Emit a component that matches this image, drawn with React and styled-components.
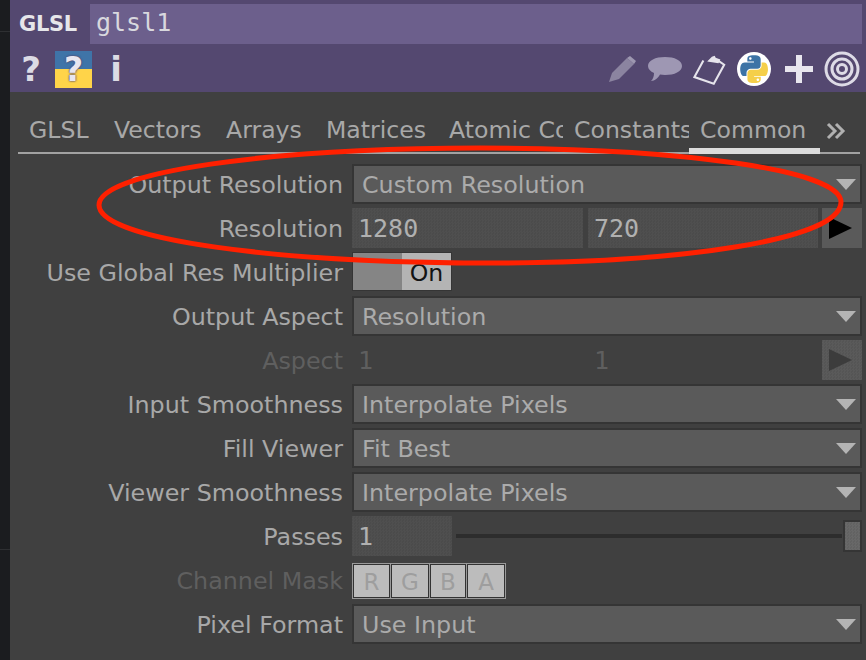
import React from "react";
import styled, { createGlobalStyle } from "styled-components";

const Global = createGlobalStyle`
  html, body { margin: 0; padding: 0; background: #404040; }
  * { box-sizing: border-box; }
`;
const SANS = `"DejaVu Sans", Verdana, sans-serif`;
const MONO = `"DejaVu Sans Mono", monospace`;
const dots = (a, b) => `repeating-conic-gradient(${a} 0 25%, ${b} 0 50%) 0 0 / 3px 3px`;

const Page = styled.div`
  position: relative; width: 866px; height: 660px; overflow: hidden;
  display: flex; background: #404040; font-family: ${SANS};
`;
const Strip = styled.div`
  width: 10px; flex: none; background: #1b1c1f; position: relative;
  &::before, &::after { content: ""; position: absolute; left: 0; right: 0; height: 1px; background: #2e2f32; }
  &::before { top: 31px; }
  &::after { top: 549px; }
`;
const Main = styled.div`flex: 1; min-width: 0; display: flex; flex-direction: column;`;
const Header = styled.header`
  height: 92px; flex: none; background: #544870; padding: 4px 4px 0 9px;
  display: flex; flex-direction: column; gap: 6px;
`;
const NameRow = styled.div`display: flex; align-items: center; height: 40px;`;
const OpType = styled.div`width: 71px; font-size: 21px; font-weight: 700; color: #e6e6ea; letter-spacing: -0.3px; white-space: nowrap;`;
const NameField = styled.div`
  flex: 1; height: 40px; background: #6c5f8c; color: #d8d8de; font: 25px/38px ${MONO}; padding-left: 6px;
`;
const IconBar = styled.div`display: flex; align-items: center; justify-content: space-between; height: 38px; padding-right: 2px;`;
const IconGroup = styled.div`display: flex; align-items: center; gap: ${p => p.$gap}px;`;
const Glyph = styled.span`
  font: 700 ${p => p.$size}px/38px ${SANS}; color: #dcdbe4; width: ${p => p.$w}px; text-align: center;
`;
const Tabs = styled.nav`
  height: 62px; flex: none; margin: 0 6px 0 8px; padding-top: 20px; display: flex;
  border-bottom: 2px solid #a2a2a2;
`;
const Tab = styled.div`
  width: ${p => p.$w}px; flex: none; height: 42px; margin-bottom: -2px; padding-left: 11px;
  overflow: hidden; white-space: nowrap; font-size: 23.6px; line-height: 36px; color: #a8a8a8;
  border-bottom: ${p => (p.$active ? "6px solid #dcdcdc" : "none")};
`;
const More = styled.div`padding: 9px 0 0 6px;`;
const Rows = styled.section`padding-top: 10px; display: flex; flex-direction: column; gap: 4px;`;
const Row = styled.div`display: flex; align-items: center; gap: 9px; height: 40px; padding-right: 4px;`;
const Label = styled.div`
  width: 333px; flex: none; text-align: right; font-size: 23.8px; line-height: 36px; padding-top: 2px; white-space: nowrap;
  color: ${p => (p.$off ? "#5f5f5f" : "#a8a8a8")};
`;
const Select = styled.div`
  flex: 1; height: 40px; background: #5a5a5a; border: 2px solid #353535; display: flex; align-items: center;
  justify-content: space-between; padding: 2px 4px 0 8px; font-size: 23.8px; color: #ababab; white-space: nowrap;
`;
const Caret = styled.i`
  width: 0; height: 0; margin-top: -2px; border-left: 10px solid transparent; border-right: 10px solid transparent;
  border-top: 11px solid #b4b4b4;
`;
const Values = styled.div`flex: 1; display: flex; gap: ${p => p.$gap ?? 5}px;`;
const NumField = styled.div`
  width: ${p => p.$w}px; flex: none; height: 40px; padding-left: 6px; font: 25px/42px ${MONO};
  color: ${p => (p.$off ? "#5f5f5f" : "#b0b0b0")};
  background: ${p => (p.$off ? "none" : dots("#4f4f4f", "#4b4b4b"))};
`;
const ArrowBtn = styled.div`
  width: 40px; height: 40px; flex: none; margin-left: -1px; display: flex; align-items: center; padding-left: 7px;
  background: ${p => (p.$off ? dots("#5a5a5a", "#555") : "#5a5a5a")};
  &::after {
    content: ""; border-top: 11px solid transparent; border-bottom: 11px solid transparent;
    border-left: 23px solid ${p => (p.$off ? "#3c3c3c" : "#000")};
  }
`;
const Toggle = styled.div`
  width: 100px; height: 39px; display: flex; margin-top: -1px; border: 1px solid #353535;
`;
const ToggleOff = styled.div`flex: 1; background: #858585;`;
const ToggleOn = styled.div`
  flex: 1; background: #b4b4b4; color: #141414; font-size: 23.6px; line-height: 41px; text-align: center;
`;
const SliderWrap = styled.div`flex: 1; margin-left: -5px; display: flex; align-items: center; gap: 4px;`;
const Track = styled.div`flex: 1; height: 4px; background: #2d2d2d;`;
const Thumb = styled.div`
  width: 19px; height: 32px; flex: none; margin-left: -3px; border: 2px solid #353535; background: ${dots("#686868", "#626262")};
`;
const Mask = styled.div`
  height: 36px; margin-top: 2px; display: flex; gap: 1px; padding: 1px; background: #9a9a9a;
`;
const MaskBtn = styled.div`
  width: ${p => p.$w}px; border: 1px solid #333; background: #bcbcbc; color: #9e9e9e;
  font-size: 23px; line-height: 34px; text-align: center;
`;
const Scribble = styled.svg`position: absolute; inset: 0; pointer-events: none;`;

const PythonLogo = ({ size }) => (
  <svg width={size} height={size} viewBox="0 0 110 110">
    <path fill="#3d74a6" d="M54.9 1c-4.6 0-9 .4-12.8 1.1C30.8 4.1 28.8 8.2 28.8 15.9v10.1h26.2v3.4H19c-7.6 0-14.3 4.6-16.4 13.3-2.4 10-2.5 16.2 0 26.6 1.9 7.8 6.3 13.3 13.9 13.3h9v-12c0-8.7 7.5-16.3 16.4-16.3h26.2c7.3 0 13.1-6 13.1-13.3V15.9c0-7.1-6-12.4-13.1-13.6C63.6 1.3 59.5 1 54.9 1z M40.7 9.1c2.7 0 4.9 2.2 4.9 5 0 2.7-2.2 4.9-4.9 4.9-2.7 0-4.9-2.2-4.9-4.9 0-2.8 2.2-5 4.9-5z" />
    <path fill="#f5cf4a" d="M84.9 29.4v11.6c0 9-7.6 16.6-16.4 16.6H42.3c-7.2 0-13.1 6.1-13.1 13.3v25c0 7.1 6.2 11.3 13.1 13.3 8.3 2.4 16.3 2.9 26.2 0 6.6-1.9 13.1-5.8 13.1-13.3v-10H55.4v-3.3h39.4c7.6 0 10.5-5.3 13.1-13.3 2.7-8.2 2.6-16.1 0-26.6-1.9-7.6-5.5-13.3-13.1-13.3z M70.1 92.7c2.7 0 4.9 2.2 4.9 4.9 0 2.8-2.2 5-4.9 5-2.7 0-4.9-2.2-4.9-5 0-2.7 2.2-4.9 4.9-4.9z" />
  </svg>
);

const PyBadge = styled.div`
  width: 34px; height: 34px; margin-right: 3px; border-radius: 50%; background: #fff; display: flex; align-items: center; justify-content: center;
`;
const HelpBadge = styled.div`
  width: 37px; height: 37px; background: linear-gradient(#3f74a8 0 50%, #ffd449 50%); display: flex; align-items: center; justify-content: center;
  color: #e8e6f0; font: 700 33px/37px ${SANS}; text-shadow: 0 0 2px #544870, 0 0 2px #544870;
`;

const Pencil = () => (
  <svg width="30" height="30" viewBox="0 0 30 30">
    <path d="M2 28l3-9L20 4l7 6-15 15z" fill="#8b84a0" />
    <path d="M20 4l3-2 6 5-2 3z" fill="#9d97b0" />
  </svg>
);
const Speech = () => (
  <svg width="36" height="28" viewBox="0 0 36 28">
    <path d="M18 2c9.5 0 17 3.400 17 9s-7.500 9-17 9c-2 0-3.500-.2-5-.5C11 23 8 26 4 26c2-2 3-4.500 3-8C3.500 16.500 1 14 1 11c0-5.600 7.500-9 17-9z" fill="#9e97b3" />
  </svg>
);
const Clipboard = () => (
  <svg width="34" height="34" viewBox="0 0 36 36" fill="none" stroke="#e6e4ec" strokeWidth="2.200">
    <path d="M11 9L1.500 26.500 22 33.500 33 13.500 27 9.500" />
    <path d="M15 10l5-5 3-1 1 2 5 2-2 4z" fill="#e6e4ec" stroke="none" />
  </svg>
);
const Plus = () => (
  <svg width="30" height="30" viewBox="0 0 30 30"><path d="M12 1h6v11h11v6H18v11h-6V18H1v-6h11z" fill="#e8e6ee" /></svg>
);
const Target = () => (
  <svg width="36" height="36" viewBox="0 0 36 36" fill="none" stroke="#dddbe6" strokeWidth="3">
    <circle cx="18" cy="18" r="16" /><circle cx="18" cy="18" r="10" /><circle cx="18" cy="18" r="4.500" />
  </svg>
);
const Chevrons = () => (
  <svg width="20" height="20" viewBox="0 0 20 20" fill="none" stroke="#b0b0b0" strokeWidth="3">
    <path d="M2 3l7 7-7 7M10 3l7 7-7 7" />
  </svg>
);

const tabs = [["GLSL", 85], ["Vectors", 112], ["Arrays", 100], ["Matrices", 123], ["Atomic Counters", 125], ["Constants", 126], ["Common", 131, true]];

export default function App() {
  return (
    <Page>
      <Global />
      <Strip />
      <Main>
        <Header>
          <NameRow>
            <OpType>GLSL</OpType>
            <NameField>glsl1</NameField>
          </NameRow>
          <IconBar>
            <IconGroup $gap={12}>
              <Glyph $size={34} $w={24}>?</Glyph>
              <HelpBadge>?</HelpBadge>
              <Glyph $size={34} $w={24}>i</Glyph>
            </IconGroup>
            <IconGroup $gap={10}>
              <Pencil /><Speech /><Clipboard />
              <PyBadge><PythonLogo size={28} /></PyBadge>
              <Plus /><Target />
            </IconGroup>
          </IconBar>
        </Header>
        <Tabs>
          {tabs.map(([t, w, a]) => <Tab key={t} $w={w} $active={a}>{t}</Tab>)}
          <More><Chevrons /></More>
        </Tabs>
        <Rows>
          <Row><Label>Output Resolution</Label><Select>Custom Resolution<Caret /></Select></Row>
          <Row>
            <Label>Resolution</Label>
            <Values>
              <NumField $w={231}>1280</NumField>
              <NumField $w={230}>720</NumField>
              <ArrowBtn />
            </Values>
          </Row>
          <Row><Label>Use Global Res Multiplier</Label><Toggle><ToggleOff /><ToggleOn>On</ToggleOn></Toggle></Row>
          <Row><Label>Output Aspect</Label><Select>Resolution<Caret /></Select></Row>
          <Row>
            <Label $off>Aspect</Label>
            <Values>
              <NumField $w={231} $off>1</NumField>
              <NumField $w={230} $off>1</NumField>
              <ArrowBtn $off />
            </Values>
          </Row>
          <Row><Label>Input Smoothness</Label><Select>Interpolate Pixels<Caret /></Select></Row>
          <Row><Label>Fill Viewer</Label><Select>Fit Best<Caret /></Select></Row>
          <Row><Label>Viewer Smoothness</Label><Select>Interpolate Pixels<Caret /></Select></Row>
          <Row>
            <Label>Passes</Label>
            <NumField $w={100}>1</NumField>
            <SliderWrap><Track /><Thumb /></SliderWrap>
          </Row>
          <Row>
            <Label $off>Channel Mask</Label>
            <Mask>
              <MaskBtn $w={37}>R</MaskBtn><MaskBtn $w={38}>G</MaskBtn><MaskBtn $w={36}>B</MaskBtn><MaskBtn $w={38}>A</MaskBtn>
            </Mask>
          </Row>
          <Row><Label>Pixel Format</Label><Select>Use Input<Caret /></Select></Row>
        </Rows>
      </Main>
      <Scribble width="866" height="660" viewBox="0 0 866 660">
        <path d="M99 205 C99 172 270 148 480 148 C680 148 841 170 841 202 C841 240 680 263 490 263 C280 263 99 240 99 205 Z" fill="none" stroke="#ff2000" strokeWidth="5" />
      </Scribble>
    </Page>
  );
}
